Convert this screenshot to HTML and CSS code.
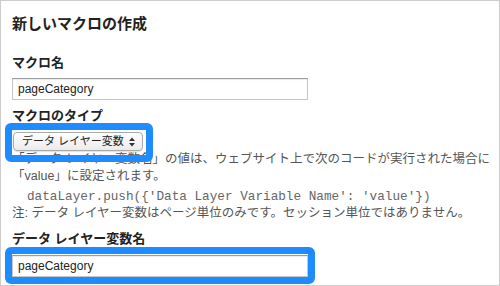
FILE: index.html
```html
<!DOCTYPE html>
<html lang="ja">
<head>
<meta charset="utf-8">
<title>新しいマクロの作成</title>
<link rel="stylesheet" href="styles.css">
</head>
<body>
<div class="frame">
  <h1 class="title">新しいマクロの作成</h1>
  <div class="label l1">マクロ名</div>
  <div class="input">pageCategory</div>
  <div class="label l2">マクロのタイプ</div>
  <div class="select-wrap">
    <div class="select"><span>データ レイヤー変数</span><svg class="arrows" width="6" height="10" viewBox="0 0 6 10"><polygon points="0,4 3,0.5 6,4"/><polygon points="0,6 3,9.5 6,6"/></svg></div>
    <span class="hl hl-select"></span>
  </div>
  <p class="desc">「データ レイヤー変数名」の値は、ウェブサイト上で次のコードが実行された場合に<br>「value」に設定されます。</p>
  <pre class="code">dataLayer.push({'Data Layer Variable Name': 'value'})</pre>
  <p class="desc">注: データ レイヤー変数はページ単位のみです。セッション単位ではありません。</p>
  <div class="label l3">データ レイヤー変数名</div>
  <div class="input-wrap">
    <div class="input input-b">pageCategory</div>
    <span class="hl hl-input"></span>
  </div>
</div>
</body>
</html>
```

FILE: styles.css
```css
body {
  margin: 0;
  background: #fff;
}

.frame {
  box-sizing: border-box;
  width: 500px;
  height: 286px;
  border: 1px solid #cccccc;
  padding: 13px 4px 0 11px;
  font-family: "Liberation Sans", "Noto Sans CJK JP", sans-serif;
  color: #222;
  overflow: hidden;
}

.title {
  margin: 0;
  font-size: 15px;
  line-height: 20px;
  font-weight: bold;
}

.label {
  font-size: 13px;
  font-weight: bold;
  line-height: 17px;
}

.l1 { margin-top: 20px; }
.l2 { margin-top: 7px; }
.l3 { margin-top: 8px; }

.input {
  box-sizing: border-box;
  width: 296px;
  height: 22px;
  margin-top: 7px;
  border: 1px solid #c6c6c6;
  border-top-color: #9c9c9c;
  padding-left: 5px;
  font-size: 12px;
  line-height: 20px;
  color: #222;
  background: #fff;
  box-shadow: inset 0 1px 1px rgba(0, 0, 0, 0.08);
}

.input-wrap {
  position: relative;
  width: 296px;
  margin-top: 8px;
}

.input-b { margin-top: 0; }

.select-wrap {
  position: relative;
  width: 130px;
  margin: 8px 0 0 1px;
}

.select {
  box-sizing: border-box;
  width: 130px;
  height: 19px;
  border: 1px solid #a9a9a9;
  border-radius: 4px;
  background: linear-gradient(#ffffff, #ebebeb);
  box-shadow: 0 1px 1px rgba(0, 0, 0, 0.12);
  display: flex;
  align-items: center;
  justify-content: space-between;
  padding: 0 7px 0 8px;
  font-size: 11px;
  line-height: 17px;
  color: #222;
}

.arrows { fill: #333; }

.hl {
  position: absolute;
  box-sizing: border-box;
  border: 7px solid #1e8cff;
  border-radius: 6px;
}

.hl-select {
  left: -8px;
  top: -9px;
  width: 148px;
  height: 39px;
}

.hl-input {
  left: -7px;
  top: -8px;
  width: 310px;
  height: 37px;
}

.desc {
  margin: 0;
  font-size: 12.5px;
  line-height: 17px;
  color: #555;
  white-space: nowrap;
}

.code {
  margin: 3px 0 0;
  padding-left: 15px;
  font-family: "Liberation Mono", monospace;
  font-size: 12.7px;
  line-height: 17px;
  color: #666;
}
```
